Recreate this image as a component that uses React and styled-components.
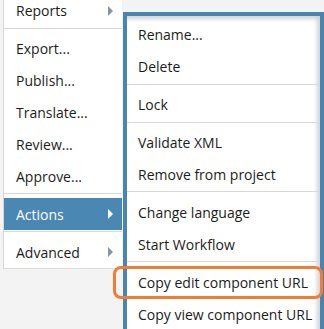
import React from "react";
import styled, { createGlobalStyle } from "styled-components";

const Global = createGlobalStyle`
  html, body { margin: 0; padding: 0; background: #f3f3f3; overflow: hidden; }
  body { font-family: "Open Sans", "Noto Sans", sans-serif; }
`;

const Page = styled.div`
  display: flex;
  align-items: flex-start;
  width: 324px;
  height: 329px;
  overflow: hidden;
`;

const MainMenu = styled.div`
  margin-left: 3px;
  margin-top: -5px;
  width: 118px;
  background: #fff;
  border-left: 1px solid #d6d6d6;
  border-bottom: 1px solid #dcdcdc;
  display: flex;
  flex-direction: column;
  flex-shrink: 0;
`;

const SubMenu = styled.div`
  position: relative;
  margin-top: 12px;
  margin-left: 1px;
  width: 193px;
  height: 330px;
  border: 4px solid #4a85b0;
  background: #fff;
  box-shadow: inset -3px 3px 4px rgba(0, 0, 0, 0.18);
  padding-top: 3px;
  display: flex;
  flex-direction: column;
`;

const Item = styled.div`
  position: relative;
  height: 31.9px;
  flex-shrink: 0;
  display: flex;
  align-items: center;
  justify-content: space-between;
  padding: 0 8px 0 ${(p) => p.$indent}px;
  font-size: 14px;
  color: ${(p) => (p.$active ? "#fff" : "#1c1c1c")};
  background: ${(p) => (p.$active ? "#4a87b2" : "transparent")};
  white-space: nowrap;
`;

const Sep = styled.div`
  height: 1px;
  flex-shrink: 0;
  background: #d8d8d8;
  margin: 1px 0 4px;
`;

const Arrow = styled.span`
  width: 0;
  height: 0;
  margin-right: 1px;
  border-top: 5px solid transparent;
  border-bottom: 5px solid transparent;
  border-left: 5px solid ${(p) => (p.$active ? "#fff" : "#8795a3")};
`;

const Highlight = styled.div`
  position: absolute;
  left: -14px;
  right: -3px;
  top: 0;
  bottom: -1px;
  border: 3px solid #f47b34;
  border-radius: 8px;
  pointer-events: none;
`;

const main = [
  { t: "Reports", sub: true },
  "sep",
  { t: "Export..." },
  { t: "Publish..." },
  { t: "Translate..." },
  { t: "Review..." },
  { t: "Approve..." },
  "sep",
  { t: "Actions", sub: true, active: true },
  "sep",
  { t: "Advanced", sub: true },
];

const sub = [
  { t: "Rename..." },
  { t: "Delete" },
  "sep",
  { t: "Lock" },
  "sep",
  { t: "Validate XML" },
  { t: "Remove from project" },
  "sep",
  { t: "Change language" },
  { t: "Start Workflow" },
  "sep",
  { t: "Copy edit component URL", mark: true },
  { t: "Copy view component URL" },
];

export default function App() {
  return (
    <>
      <Global />
      <Page>
        <MainMenu>
          {main.map((m, i) =>
            m === "sep" ? (
              <Sep key={i} />
            ) : (
              <Item key={i} $indent={12} $active={m.active}>
                <span>{m.t}</span>
                {m.sub && <Arrow $active={m.active} />}
              </Item>
            )
          )}
        </MainMenu>
        <SubMenu>
          {sub.map((m, i) =>
            m === "sep" ? (
              <Sep key={i} />
            ) : (
              <Item key={i} $indent={11}>
                <span>{m.t}</span>
                {m.mark && <Highlight />}
              </Item>
            )
          )}
        </SubMenu>
      </Page>
    </>
  );
}
